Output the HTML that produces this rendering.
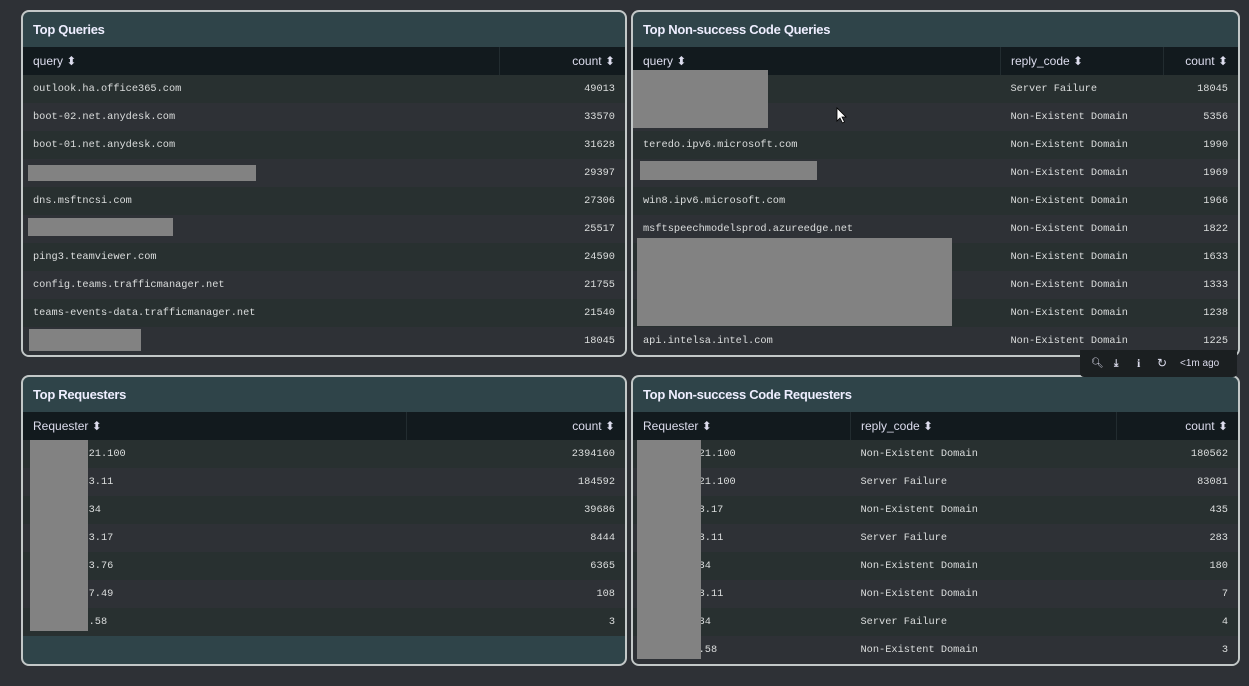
<!DOCTYPE html><html><head><style>
body{margin:0;width:1249px;height:686px;background:#2e3136;position:relative;overflow:hidden;font-family:"Liberation Sans",sans-serif;}
.p{position:absolute;border:2px solid #c3c8c8;border-radius:8px;background:#2f4449;overflow:hidden;box-sizing:border-box}
.h{height:35px;line-height:35px;padding-left:10px;color:#eef;font-size:13px;font-weight:bold;letter-spacing:-0.3px}
table{border-collapse:collapse;width:100%;table-layout:fixed}
th{background:#121a1e;color:#dde;font-weight:normal;font-size:12px;height:28px;text-align:left;padding:0 10px;border-left:1px solid #222c30}
th:first-child{border-left:none}
td{height:28px;padding:0 10px;font-family:"Liberation Mono",monospace;font-size:10.3px;color:#dcdede;white-space:nowrap;overflow:hidden}
tr.a td{background:#283030}tr.b td{background:#2e3136}
.r{text-align:right}
.g{position:absolute;background:#828282}
</style></head><body>
<div class="p" style="left:21px;top:10px;width:606px;height:347px">
<div class="h">Top Queries</div>
<table><tr><th style="width:456px">query ⬍</th><th class="r">count ⬍</th></tr>
<tr class="a"><td>outlook.ha.office365.com</td><td class="r">49013</td></tr>
<tr class="b"><td>boot-02.net.anydesk.com</td><td class="r">33570</td></tr>
<tr class="a"><td>boot-01.net.anydesk.com</td><td class="r">31628</td></tr>
<tr class="b"><td></td><td class="r">29397</td></tr>
<tr class="a"><td>dns.msftncsi.com</td><td class="r">27306</td></tr>
<tr class="b"><td></td><td class="r">25517</td></tr>
<tr class="a"><td>ping3.teamviewer.com</td><td class="r">24590</td></tr>
<tr class="b"><td>config.teams.trafficmanager.net</td><td class="r">21755</td></tr>
<tr class="a"><td>teams-events-data.trafficmanager.net</td><td class="r">21540</td></tr>
<tr class="b"><td></td><td class="r">18045</td></tr>
</table></div>
<div class="p" style="left:631px;top:10px;width:609px;height:347px">
<div class="h">Top Non-success Code Queries</div>
<table><tr><th style="width:347px">query ⬍</th><th style="width:142px">reply_code ⬍</th><th class="r">count ⬍</th></tr>
<tr class="a"><td></td><td>Server Failure</td><td class="r">18045</td></tr>
<tr class="b"><td></td><td>Non-Existent Domain</td><td class="r">5356</td></tr>
<tr class="a"><td>teredo.ipv6.microsoft.com</td><td>Non-Existent Domain</td><td class="r">1990</td></tr>
<tr class="b"><td></td><td>Non-Existent Domain</td><td class="r">1969</td></tr>
<tr class="a"><td>win8.ipv6.microsoft.com</td><td>Non-Existent Domain</td><td class="r">1966</td></tr>
<tr class="b"><td>msftspeechmodelsprod.azureedge.net</td><td>Non-Existent Domain</td><td class="r">1822</td></tr>
<tr class="a"><td></td><td>Non-Existent Domain</td><td class="r">1633</td></tr>
<tr class="b"><td></td><td>Non-Existent Domain</td><td class="r">1333</td></tr>
<tr class="a"><td></td><td>Non-Existent Domain</td><td class="r">1238</td></tr>
<tr class="b"><td>api.intelsa.intel.com</td><td>Non-Existent Domain</td><td class="r">1225</td></tr>
</table></div>
<div class="p" style="left:21px;top:375px;width:606px;height:291px">
<div class="h">Top Requesters</div>
<table><tr><th style="width:363px">Requester ⬍</th><th class="r">count ⬍</th></tr>
<tr class="a"><td>&nbsp;&nbsp;&nbsp;&nbsp;&nbsp;&nbsp;&nbsp;&nbsp;&nbsp;21.100</td><td class="r">2394160</td></tr>
<tr class="b"><td>&nbsp;&nbsp;&nbsp;&nbsp;&nbsp;&nbsp;&nbsp;&nbsp;&nbsp;3.11</td><td class="r">184592</td></tr>
<tr class="a"><td>&nbsp;&nbsp;&nbsp;&nbsp;&nbsp;&nbsp;&nbsp;&nbsp;&nbsp;34</td><td class="r">39686</td></tr>
<tr class="b"><td>&nbsp;&nbsp;&nbsp;&nbsp;&nbsp;&nbsp;&nbsp;&nbsp;&nbsp;3.17</td><td class="r">8444</td></tr>
<tr class="a"><td>&nbsp;&nbsp;&nbsp;&nbsp;&nbsp;&nbsp;&nbsp;&nbsp;&nbsp;3.76</td><td class="r">6365</td></tr>
<tr class="b"><td>&nbsp;&nbsp;&nbsp;&nbsp;&nbsp;&nbsp;&nbsp;&nbsp;&nbsp;7.49</td><td class="r">108</td></tr>
<tr class="a"><td>&nbsp;&nbsp;&nbsp;&nbsp;&nbsp;&nbsp;&nbsp;&nbsp;&nbsp;.58</td><td class="r">3</td></tr>
</table></div>
<div class="p" style="left:631px;top:375px;width:609px;height:291px">
<div class="h">Top Non-success Code Requesters</div>
<table><tr><th style="width:197px">Requester ⬍</th><th style="width:245px">reply_code ⬍</th><th class="r">count ⬍</th></tr>
<tr class="a"><td>&nbsp;&nbsp;&nbsp;&nbsp;&nbsp;&nbsp;&nbsp;&nbsp;&nbsp;21.100</td><td>Non-Existent Domain</td><td class="r">180562</td></tr>
<tr class="b"><td>&nbsp;&nbsp;&nbsp;&nbsp;&nbsp;&nbsp;&nbsp;&nbsp;&nbsp;21.100</td><td>Server Failure</td><td class="r">83081</td></tr>
<tr class="a"><td>&nbsp;&nbsp;&nbsp;&nbsp;&nbsp;&nbsp;&nbsp;&nbsp;&nbsp;3.17</td><td>Non-Existent Domain</td><td class="r">435</td></tr>
<tr class="b"><td>&nbsp;&nbsp;&nbsp;&nbsp;&nbsp;&nbsp;&nbsp;&nbsp;&nbsp;3.11</td><td>Server Failure</td><td class="r">283</td></tr>
<tr class="a"><td>&nbsp;&nbsp;&nbsp;&nbsp;&nbsp;&nbsp;&nbsp;&nbsp;&nbsp;34</td><td>Non-Existent Domain</td><td class="r">180</td></tr>
<tr class="b"><td>&nbsp;&nbsp;&nbsp;&nbsp;&nbsp;&nbsp;&nbsp;&nbsp;&nbsp;3.11</td><td>Non-Existent Domain</td><td class="r">7</td></tr>
<tr class="a"><td>&nbsp;&nbsp;&nbsp;&nbsp;&nbsp;&nbsp;&nbsp;&nbsp;&nbsp;34</td><td>Server Failure</td><td class="r">4</td></tr>
<tr class="b"><td>&nbsp;&nbsp;&nbsp;&nbsp;&nbsp;&nbsp;&nbsp;&nbsp;&nbsp;.58</td><td>Non-Existent Domain</td><td class="r">3</td></tr>
</table></div>
<div class="g" style="left:28px;top:165px;width:228px;height:16px"></div>
<div class="g" style="left:28px;top:218px;width:145px;height:18px"></div>
<div class="g" style="left:29px;top:329px;width:112px;height:22px"></div>
<div class="g" style="left:633px;top:70px;width:135px;height:58px"></div>
<div class="g" style="left:640px;top:161px;width:177px;height:19px"></div>
<div class="g" style="left:637px;top:238px;width:315px;height:88px"></div>
<div class="g" style="left:30px;top:440px;width:58px;height:191px"></div>
<div class="g" style="left:637px;top:440px;width:64px;height:219px"></div>
<svg style="position:absolute;left:836px;top:107px" width="12" height="18" viewBox="0 0 12 18"><path d="M1 1 L1 14 L4 11 L6.5 16 L8.5 15 L6 10 L10 10 Z" fill="#fff" stroke="#000" stroke-width="0.8"/></svg>
<div style="position:absolute;left:1080px;top:350px;width:157px;height:27px;background:#1b1f21;border-radius:0 0 4px 4px;color:#dde;font-size:10px;line-height:27px">
<span style="position:absolute;left:11px">&#x1F50D;&#xFE0E;</span>
<span style="position:absolute;left:34px;font-weight:bold">⤓</span>
<span style="position:absolute;left:57px;font-weight:bold;font-family:'Liberation Serif',serif;font-size:12px">i</span>
<span style="position:absolute;left:77px;font-size:12px">↻</span>
<span style="position:absolute;left:100px">&lt;1m ago</span>
</div>
</body></html>
